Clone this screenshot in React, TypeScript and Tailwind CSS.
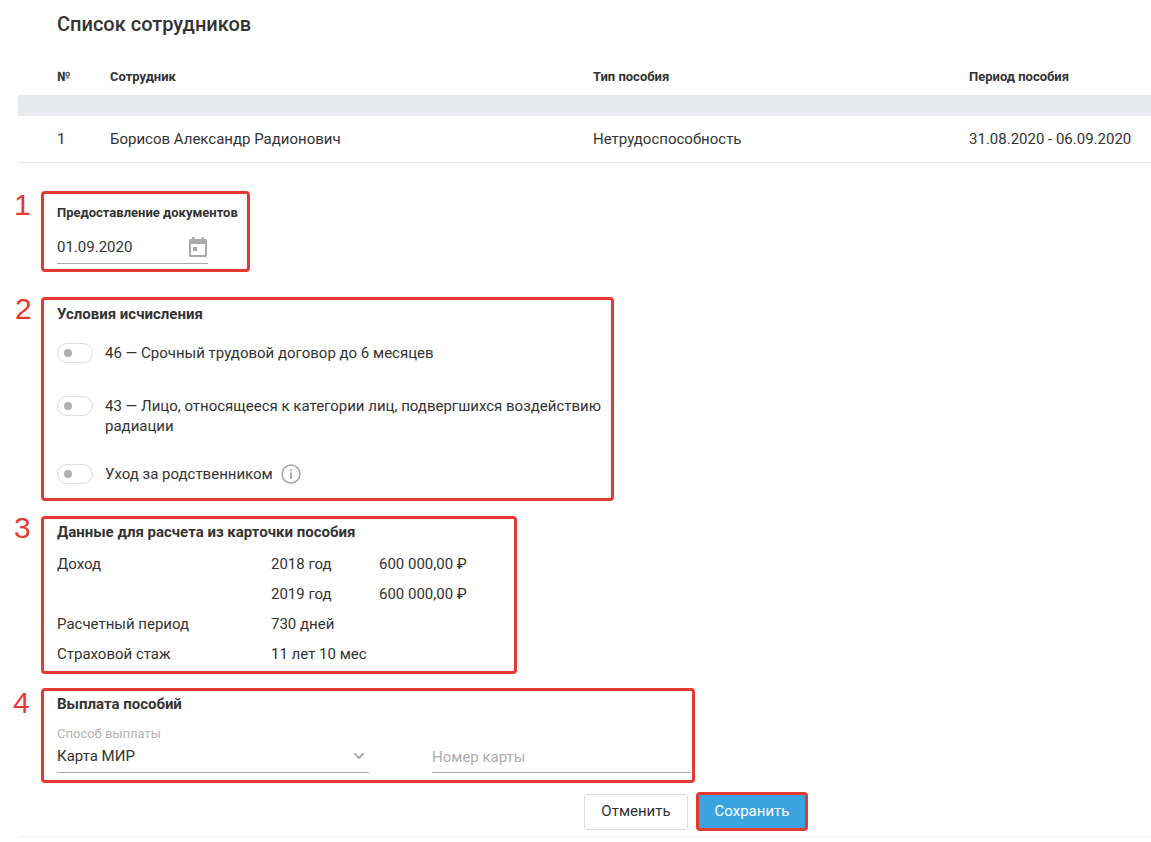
import { ChevronDown } from "lucide-react";
import type { ReactNode } from "react";

function Section({
	num,
	numClass,
	className,
	children,
}: {
	num: string;
	numClass: string;
	className: string;
	children: ReactNode;
}) {
	return (
		<section
			className={`relative border-[3px] border-[#e53a32] rounded-[4px] ${className}`}
		>
			<span
				className={`absolute font-['Liberation_Sans',sans-serif] text-[30px] leading-none text-[#e53a32] ${numClass}`}
			>
				{num}
			</span>
			{children}
		</section>
	);
}

function Toggle() {
	return (
		<span className="flex items-center shrink-0 w-[36px] h-[20px] rounded-full border border-[#dddddd] pl-[6px] bg-white">
			<span className="w-[8px] h-[8px] rounded-full bg-[#b0b0b0]" />
		</span>
	);
}

function CalendarIcon() {
	return (
		<svg width="20" height="22" viewBox="0 0 20 22" fill="none">
			<path
				fillRule="evenodd"
				clipRule="evenodd"
				d="M4 1h2.500v2h7V1H16v2h1.500A1.500 1.500 0 0 1 19 4.500V19.500A1.500 1.500 0 0 1 17.500 21H2.500A1.500 1.500 0 0 1 1 19.500V4.500A1.500 1.500 0 0 1 2.500 3H4V1ZM3 8v11h14V8H3Z"
				fill="#a9a9a9"
			/>
			<rect x="5" y="11" width="4" height="4" fill="#a9a9a9" />
		</svg>
	);
}

function InfoIcon() {
	return (
		<svg width="20" height="20" viewBox="0 0 20 20" fill="none">
			<circle cx="10" cy="10" r="9" stroke="#a6a6a6" strokeWidth="1.500" />
			<rect x="9.100" y="8.500" width="1.800" height="6.500" fill="#a6a6a6" />
			<rect x="9.100" y="5.200" width="1.800" height="1.800" fill="#a6a6a6" />
		</svg>
	);
}

const incomeRows = [
	{ label: "Доход", middle: "2018 год", amount: "600 000,00 ₽" },
	{ label: "", middle: "2019 год", amount: "600 000,00 ₽" },
	{ label: "Расчетный период", middle: "730 дней", amount: "" },
	{ label: "Страховой стаж", middle: "11 лет 10 мес", amount: "" },
];

export default function App() {
	return (
		<div className="w-[1151px] h-[842px] overflow-hidden bg-white font-['Roboto',sans-serif] text-[15px] text-[#333333]">
			<h1 className="pl-[57px] pt-[12px] text-[20px] leading-[24px] font-medium">
				Список сотрудников
			</h1>

			<div className="mt-[31px] ml-[18px]">
				<div className="flex h-[28px] items-center pb-[8px] pl-[39px] text-[13px] font-bold">
					<span className="w-[53px]">№</span>
					<span className="w-[483px]">Сотрудник</span>
					<span className="w-[376px]">Тип пособия</span>
					<span>Период пособия</span>
				</div>
				<div className="h-[21px] bg-gradient-to-b from-[#e6e8eb] to-[#e9ebee]" />
				<div className="flex h-[47px] items-center border-b border-[#e5e5e5] pl-[39px]">
					<span className="w-[53px]">1</span>
					<span className="w-[483px]">Борисов Александр Радионович</span>
					<span className="w-[376px]">Нетрудоспособность</span>
					<span>31.08.2020 - 06.09.2020</span>
				</div>
			</div>

			<div className="ml-[41px] mt-[28px] flex flex-col items-start">
				<Section num="1" numClass="left-[-30px] top-[-4px]" className="w-[209px] h-[81px] pl-[13px] pt-[11px]">
					<div className="text-[13px] leading-[16px] font-bold whitespace-nowrap">
						Предоставление документов
					</div>
					<div className="mt-[12px] flex h-[31px] w-[151px] items-center justify-between border-b border-[#aaaaaa] pb-[2px]">
						<span>01.09.2020</span>
						<CalendarIcon />
					</div>
				</Section>

				<Section num="2" numClass="left-[-29px] top-[-6px]" className="mt-[25px] w-[573px] h-[204px] pl-[13px] pt-[4px]">
					<div className="text-[15px] leading-[20px] font-bold">Условия исчисления</div>
					<div className="mt-[19px] flex items-center gap-[12px] leading-[20px]">
						<Toggle />
						<span>46 — Срочный трудовой договор до 6 месяцев</span>
					</div>
					<div className="mt-[33px] flex items-start gap-[12px] leading-[20px]">
						<Toggle />
						<span className="w-[505px]">
							43 — Лицо, относящееся к категории лиц, подвергшихся воздействию радиации
						</span>
					</div>
					<div className="mt-[28px] flex items-center gap-[12px] leading-[20px]">
						<Toggle />
						<span>Уход за родственником</span>
						<span className="-ml-[4px] flex">
							<InfoIcon />
						</span>
					</div>
				</Section>

				<Section num="3" numClass="left-[-30px] top-[-6px]" className="mt-[15px] w-[476px] h-[158px] pl-[13px] pt-[3px]">
					<div className="text-[15px] leading-[20px] font-bold">
						Данные для расчета из карточки пособия
					</div>
					<div className="mt-[7px] flex flex-col">
						{incomeRows.map((row) => (
							<div key={row.middle} className="flex h-[30px] items-center">
								<span className="w-[214px]">{row.label}</span>
								<span className="w-[108px]">{row.middle}</span>
								<span>{row.amount}</span>
							</div>
						))}
					</div>
				</Section>

				<Section num="4" numClass="left-[-31px] top-[-3px]" className="mt-[14px] w-[654px] h-[95px] pl-[13px] pt-[3px]">
					<div className="text-[15px] leading-[20px] font-bold">Выплата пособий</div>
					<div className="mt-[13px] flex items-end gap-[63px]">
						<div className="w-[312px] border-b border-[#aaaaaa]">
							<div className="text-[13px] leading-[14px] text-[#b3b3b3]">Способ выплаты</div>
							<div className="flex h-[31px] items-center justify-between pb-[1px] pr-[2px]">
								<span>Карта МИР</span>
								<ChevronDown size={16} strokeWidth={3.5} color="#b0b0b0" />
							</div>
						</div>
						<div className="flex h-[31px] w-[259px] items-center border-b border-[#aaaaaa] text-[#aeaeae]">
							Номер карты
						</div>
					</div>
				</Section>
			</div>

			<div className="mt-[9px] flex items-center pl-[584px]">
				<button
					type="button"
					className="h-[36px] w-[104px] rounded-[3px] border border-[#dddddd] bg-white text-[15px] text-[#333333]"
				>
					Отменить
				</button>
				<button
					type="button"
					className="ml-[8px] h-[39px] w-[112px] rounded-[4px] border-[3px] border-[#e53a32] bg-[#3ba3df] text-[15px] text-white"
				>
					Сохранить
				</button>
			</div>
			<div className="ml-[18px] mt-[5px] border-t border-[#f3f3f3]" />
		</div>
	);
}
